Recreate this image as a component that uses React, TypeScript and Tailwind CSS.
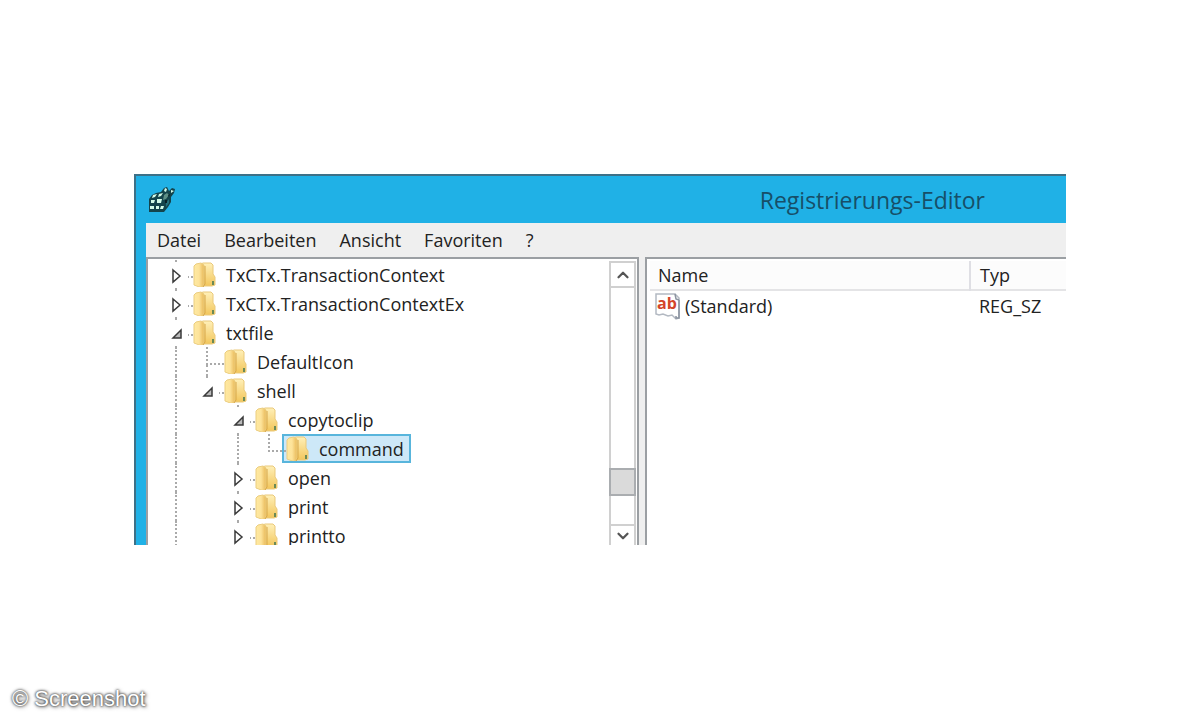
import React from 'react';
import { ChevronDown, ChevronUp } from 'lucide-react';

type TreeNode = {
  name: string;
  state: 'open' | 'closed' | 'leaf';
  // one entry per ancestor column, true draws the vertical line
  guides: boolean[];
  last?: boolean;
  selected?: boolean;
};

const nodes: TreeNode[] = [
  { name: 'TxCTx.TransactionContext', state: 'closed', guides: [] },
  { name: 'TxCTx.TransactionContextEx', state: 'closed', guides: [] },
  { name: 'txtfile', state: 'open', guides: [] },
  { name: 'DefaultIcon', state: 'leaf', guides: [true] },
  { name: 'shell', state: 'open', guides: [true], last: true },
  { name: 'copytoclip', state: 'open', guides: [true, false] },
  { name: 'command', state: 'leaf', guides: [true, false, true], last: true, selected: true },
  { name: 'open', state: 'closed', guides: [true, false] },
  { name: 'print', state: 'closed', guides: [true, false] },
  { name: 'printto', state: 'closed', guides: [true, false] },
];

const menuItems = ['Datei', 'Bearbeiten', 'Ansicht', 'Favoriten', '?'];

const RegistryIcon: React.FC = () => (
  <svg className="h-7 w-7" viewBox="0 0 28 28" aria-hidden="true">
    <path d="M1 13 4 9l4-2 5-1 3-4 3-1 2 4 3-3 3 1-1 4-3 4v5l-3 5-4 5H1z" fill="#14444c" />
    <path d="m5 9 4-1-2 3-3 1zM11 8l4-1-2 3-3 1zM3 14h4l-1 3H3zM9 13h5l-1 4H9zM2 20h4v3H2zM8 20h3v3H8zM13 20h3l-1 3h-3zM17 2l2 1-1 3-2-1zM23 4l3 1-3 2z" fill="#d3fbe9" />
    <path d="m16 9 3-2 2 2-3 4-3 1z" fill="#5d8f86" />
    <path d="m18 17 3-4v4l-3 4z" fill="#26707c" />
    <path d="M17 14h2v3h-2zM20 9l2-1-1 3z" fill="#081e24" />
  </svg>
);

const FolderIcon: React.FC = () => (
  <svg className="h-7 w-6 shrink-0" viewBox="0 0 24 28" aria-hidden="true">
    <defs>
      <linearGradient id="folderFront" x1="0" x2="1">
        <stop offset="0" stopColor="#ffe9a0" />
        <stop offset="0.5" stopColor="#fde39a" />
        <stop offset="1" stopColor="#e9b957" />
      </linearGradient>
      <linearGradient id="folderBack" x1="0" x2="0" y1="0" y2="1">
        <stop offset="0" stopColor="#fff0b8" />
        <stop offset="1" stopColor="#f2c65c" />
      </linearGradient>
    </defs>
    <path d="M8 3l2-1h8l2 2v9l2 3v8l-3 1H9z" fill="url(#folderBack)" stroke="#eac97a" />
    <path d="M1 5 3 3l5-1 3 2v19l-2 4-8-3z" fill="url(#folderFront)" stroke="#ebcd80" />
    <path d="M12 5v18l-2 3" fill="none" stroke="#d7a647" />
    <path d="M19 20h2v4h-2z" fill="#6b8a55" />
  </svg>
);

const StringValueIcon: React.FC = () => (
  <svg className="h-7 w-7 shrink-0" viewBox="0 0 28 28" aria-hidden="true">
    <path d="M2 2h19l4 4v20l-3 1-4-4-4 1-5-2-4 1-3-1z" fill="#fff" stroke="#b3b9c2" strokeWidth="1.5" />
    <path d="m21 2 1 5 3 1M22 24v2h3V8" fill="none" stroke="#8b93a0" strokeWidth="1.5" />
    <text x="3" y="17" fill="#d4452a" fontFamily="Open Sans, sans-serif" fontSize="16" fontWeight="700">ab</text>
  </svg>
);

const Expander: React.FC<{ name: string; open: boolean }> = ({ name, open }) => (
  <button
    type="button"
    aria-label={name}
    aria-expanded={open}
    className="absolute left-1 top-1 flex h-6 w-[22px] items-center justify-center bg-white"
  >
    <svg className="h-4 w-3" viewBox="0 0 12 16" fill="none" stroke="#3a3a3a" strokeWidth="1.5">
      {open ? <path d="M10 4v8H2z" fill="#bbb" /> : <path d="m2 2 7 6-7 6z" />}
    </svg>
  </button>
);

const TreeRow: React.FC<{ node: TreeNode }> = ({ node }) => (
  <li
    role="treeitem"
    aria-level={node.guides.length + 1}
    aria-selected={!!node.selected}
    className="flex h-[29px] shrink-0"
  >
    {node.guides.map((line, i) => (
      <span key={i} className="w-[31px] shrink-0 pl-[13px]">
        {line && <span className="block h-full border-l-2 border-dotted border-[#aaa]" />}
      </span>
    ))}
    <span className="relative w-[31px] shrink-0 pl-[13px]">
      <span className="block h-[18px] border-b-2 border-l-2 border-dotted border-[#aaa]" />
      {!node.last && <span className="block h-[11px] border-l-2 border-dotted border-[#aaa]" />}
      {node.state !== 'leaf' && <Expander name={node.name} open={node.state === 'open'} />}
    </span>
    <button
      type="button"
      className={`-ml-1 flex items-center overflow-hidden border-2 pl-[2px] pr-[5px] ${
        node.selected ? 'border-[#58b5dc] bg-[#cde8f8]' : 'border-transparent'
      }`}
    >
      <FolderIcon />
      <span className="pl-[9px] leading-6">{node.name}</span>
    </button>
  </li>
);

const ScrollBar: React.FC = () => (
  <div className="flex w-[27px] shrink-0 flex-col border-x-2 border-[#d0d0d0] bg-white">
    <button
      type="button"
      aria-label="Nach oben"
      className="flex h-[27px] shrink-0 items-center justify-center border-y-2 border-[#d0d0d0]"
    >
      <ChevronUp className="h-[18px] w-[18px] text-[#555]" strokeWidth={3} />
    </button>
    <div className="flex grow flex-col justify-end pb-7">
      <div className="-mx-[2px] h-7 border-2 border-[#aaadb0] bg-[#dadada]" />
    </div>
    <button
      type="button"
      aria-label="Nach unten"
      className="flex h-[21px] shrink-0 items-end justify-center border-t-2 border-[#d0d0d0]"
    >
      <ChevronDown className="h-[18px] w-[18px] text-[#555]" strokeWidth={3} />
    </button>
  </div>
);

const ValueTable: React.FC = () => (
  <table className="w-full table-fixed border-collapse text-left">
    <thead>
      <tr className="h-[29px] border-b-2 border-[#e4e4e6] bg-[#fcfcfc]">
        <th scope="col" className="w-[320px] border-r-2 border-[#dfdfe4] pl-2 font-normal leading-6">Name</th>
        <th scope="col" className="pl-[9px] font-normal leading-6">Typ</th>
      </tr>
    </thead>
    <tbody>
      <tr>
        <td>
          <span className="flex items-center pl-1 leading-[30px]">
            <StringValueIcon />
            <span className="pl-[3px]">(Standard)</span>
          </span>
        </td>
        <td className="pl-[9px] leading-[30px]">REG_SZ</td>
      </tr>
    </tbody>
  </table>
);

export default function App() {
  return (
    <div className="flex min-h-screen flex-col bg-white font-['Open_Sans','Noto_Sans',sans-serif] text-[18px] text-[#222]">
      <main className="px-[134px] pt-[174px]">
        <div className="flex h-[371px] flex-col overflow-hidden border-l-2 border-t-2 border-[#3d7087] bg-[#20b1e6]">
          <header className="flex h-[47px] shrink-0 items-center justify-between pl-3 pr-[81px]">
            <RegistryIcon />
            <h1 className="text-[23px] leading-8 text-[#174f68]">Registrierungs-Editor</h1>
          </header>
          <div className="ml-[10px] flex min-h-0 grow flex-col bg-[#efefef]">
            <nav className="flex h-[34px] shrink-0 items-center gap-[23px] pl-[11px]">
              {menuItems.map((item) => (
                <button key={item} type="button">{item}</button>
              ))}
            </nav>
            <div className="flex min-h-0 grow gap-[6px]">
              <section className="flex w-[493px] shrink-0 border-x-2 border-t-2 border-[#9b9fa3] bg-white pr-px">
                <ul role="tree" className="flex grow flex-col overflow-hidden pl-[14px] pt-px">
                  {nodes.map((node) => (
                    <TreeRow key={node.name} node={node} />
                  ))}
                </ul>
                <div className="flex pt-[2px]">
                  <ScrollBar />
                </div>
              </section>
              <section className="min-w-0 grow border-l-2 border-t-2 border-[#9b9fa3] bg-white pl-[3px] pt-[2px]">
                <ValueTable />
              </section>
            </div>
          </div>
        </div>
      </main>
      <footer className="mt-auto px-3 pb-[3px] font-['Liberation_Sans',sans-serif] text-[22px] leading-9 text-white [text-shadow:0_0_2px_#444,0_0_3px_#555,1px_1px_4px_#777]">
        © Screenshot
      </footer>
    </div>
  );
}
